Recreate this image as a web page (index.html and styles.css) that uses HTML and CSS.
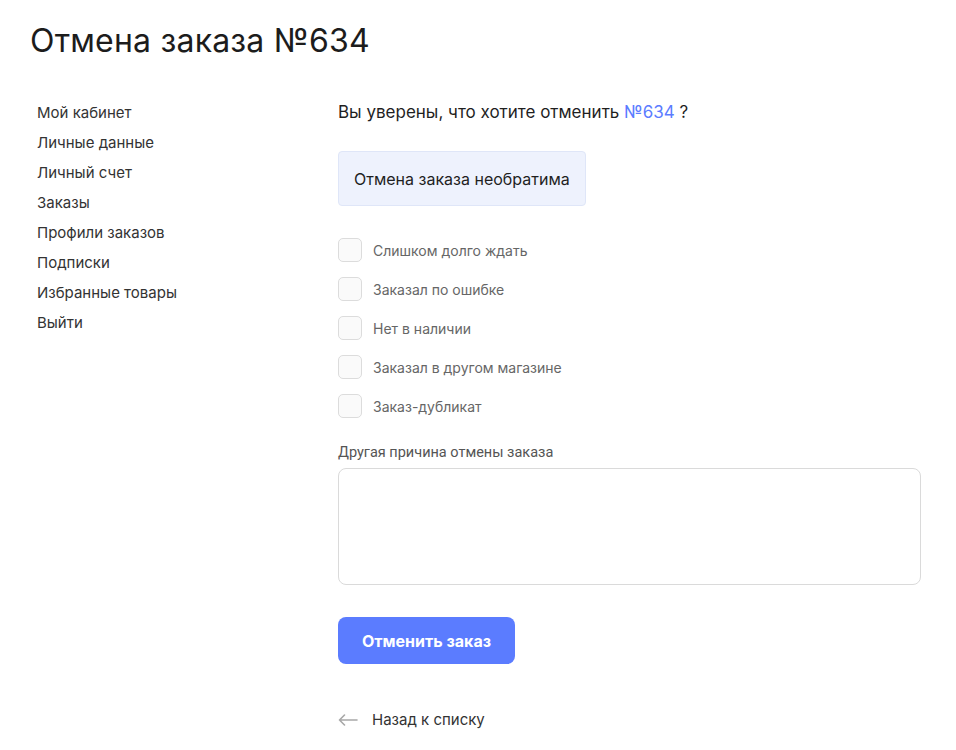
FILE: index.html
```html
<!DOCTYPE html>
<html lang="ru">
<head>
<meta charset="utf-8">
<title>Отмена заказа №634</title>
<link rel="stylesheet" href="styles.css">
</head>
<body>
<div class="page">
  <h1 class="title">Отмена заказа №634</h1>
  <div class="layout">
    <nav class="sidenav">
      <a href="#">Мой кабинет</a>
      <a href="#">Личные данные</a>
      <a href="#">Личный счет</a>
      <a href="#">Заказы</a>
      <a href="#">Профили заказов</a>
      <a href="#">Подписки</a>
      <a href="#">Избранные товары</a>
      <a href="#">Выйти</a>
    </nav>
    <main class="main">
      <p class="question">Вы уверены, что хотите отменить <a href="#" class="order-link">№634</a> ?</p>
      <div class="notice">Отмена заказа необратима</div>
      <div class="reasons">
        <label class="reason"><span class="box"></span><span>Слишком долго ждать</span></label>
        <label class="reason"><span class="box"></span><span>Заказал по ошибке</span></label>
        <label class="reason"><span class="box"></span><span>Нет в наличии</span></label>
        <label class="reason"><span class="box"></span><span>Заказал в другом магазине</span></label>
        <label class="reason"><span class="box"></span><span>Заказ-дубликат</span></label>
      </div>
      <div class="field-label">Другая причина отмены заказа</div>
      <div class="textarea"></div>
      <button class="btn" type="button">Отменить заказ</button>
      <a href="#" class="back">
        <svg width="20" height="12" viewBox="0 0 20 12" fill="none" stroke="#a8a8a8" stroke-width="1.6" stroke-linecap="round" stroke-linejoin="round"><path d="M19 6H1.5M6.5 1L1.5 6l5 5"/></svg>
        <span>Назад к списку</span>
      </a>
    </main>
  </div>
</div>
</body>
</html>
```

FILE: styles.css
```css
* { box-sizing: border-box; }
html, body { margin: 0; padding: 0; background: #fff; }
body {
  font-family: Inter, "Noto Sans", sans-serif;
  color: #1f1f1f;
}
.page {
  padding: 20px 35px 0 30px;
}
.title {
  margin: 0;
  font-size: 32px;
  font-weight: 400;
  line-height: 42px;
  letter-spacing: 0.2px;
  color: #1c1c1c;
}
.layout {
  display: grid;
  grid-template-columns: 308px 1fr;
  margin-top: 36px;
}
.sidenav {
  display: flex;
  flex-direction: column;
  padding-left: 7px;
}
.sidenav a {
  font-size: 15px;
  line-height: 30px;
  color: #333;
  text-decoration: none;
}
.main {
  display: flex;
  flex-direction: column;
  align-items: flex-start;
}
.question {
  margin: -1px 0 0;
  font-size: 17px;
  line-height: 30px;
  color: #1f1f1f;
}
.order-link {
  color: #5b7cff;
  text-decoration: none;
}
.notice {
  margin-top: 24px;
  padding: 0 15px;
  height: 55px;
  display: flex;
  align-items: center;
  background: #eef2fd;
  border: 1px solid #dfe6f8;
  border-radius: 4px;
  font-size: 16px;
  color: #1f1f1f;
}
.reasons {
  display: flex;
  flex-direction: column;
  gap: 15px;
  margin-top: 32px;
}
.reason {
  display: flex;
  align-items: center;
  gap: 11px;
  font-size: 14px;
  color: #666;
}
.box {
  width: 24px;
  height: 24px;
  border: 1px solid #dcdcdc;
  border-radius: 5px;
  background: #fafafa;
  flex: none;
}
.field-label {
  margin-top: 25px;
  font-family: Roboto, "Liberation Sans", sans-serif;
  font-size: 14.5px;
  line-height: 20px;
  color: #555;
}
.textarea {
  margin-top: 5px;
  align-self: stretch;
  height: 117px;
  border: 1px solid #dadada;
  border-radius: 8px;
}
.btn {
  margin-top: 32px;
  width: 177px;
  height: 47px;
  border: none;
  border-radius: 8px;
  background: #5b7cff;
  color: #fff;
  font-family: Inter, "Noto Sans", sans-serif;
  font-size: 16px;
  font-weight: 700;
  cursor: pointer;
}
.back {
  margin-top: 46px;
  display: flex;
  align-items: center;
  gap: 14px;
  font-size: 15px;
  color: #333;
  text-decoration: none;
}
```
